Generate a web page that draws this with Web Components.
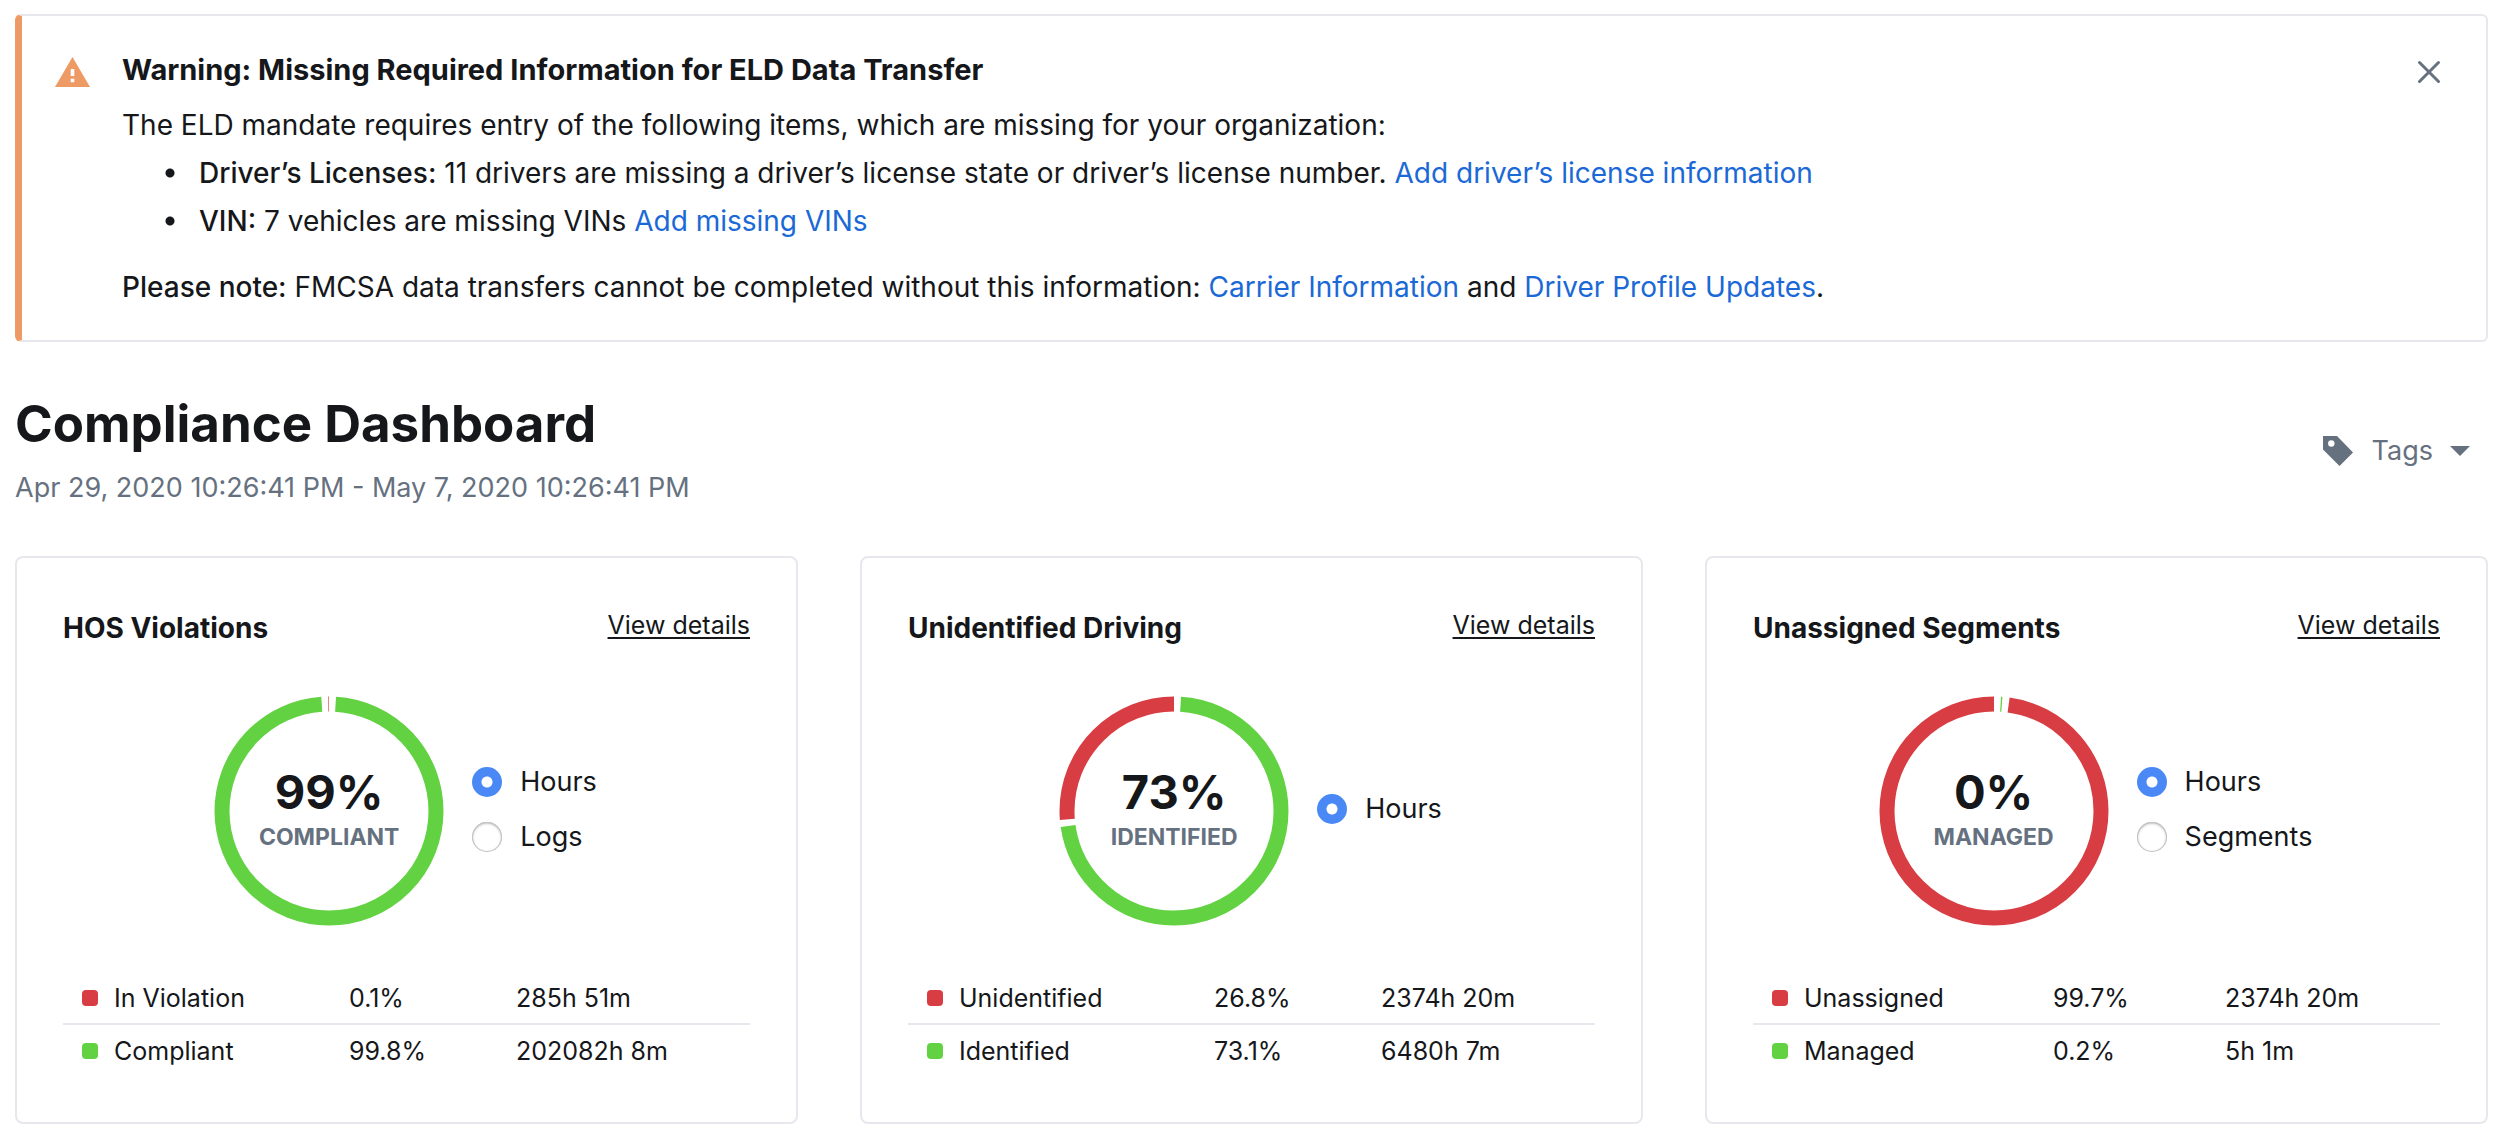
<!DOCTYPE html>
<html lang="en">
<head>
<meta charset="UTF-8">
<meta name="viewport" content="width=device-width, initial-scale=1.0">
<title>Compliance Dashboard</title>
<style>
    body {
        margin: 0;
        padding: 14px 12px 16px 15px;
        background: #fff;
        color: #15171a;
        font-family: Inter, "Liberation Sans", sans-serif;
        font-size: 27px;
        line-height: 48px;
    }
    alert-banner { font-size: 28px; }
    alert-banner p { margin: 0; }
    alert-banner ul { margin: 0 0 18px; padding-left: 43px; list-style: none; }
    alert-banner li {
        padding-left: 34px;
        background: radial-gradient(circle at 5px 24px, currentColor 4px, transparent 5px);
    }
    alert-banner a { color: #1b69d6; text-decoration: none; }
    alert-banner strong { font-weight: 500; }
    .cards {
        display: grid;
        grid-template-columns: repeat(3, minmax(0, 1fr));
        gap: 62px;
        margin-top: 50px;
    }
</style>
</head>
<body>
    <alert-banner>
        <span slot="title">Warning: Missing Required Information for ELD Data Transfer</span>
        <p>The ELD mandate requires entry of the following items, which are missing for your organization:</p>
        <ul>
            <li><strong>Driver’s Licenses:</strong> 11 drivers are missing a driver’s license state or driver’s license number. <a href="#licenses">Add driver’s license information</a></li>
            <li><strong>VIN:</strong> 7 vehicles are missing VINs <a href="#vins">Add missing VINs</a></li>
        </ul>
        <p><strong>Please note:</strong> FMCSA data transfers cannot be completed without this information: <a href="#carrier">Carrier Information</a> and <a href="#profiles">Driver Profile Updates</a>.</p>
    </alert-banner>

    <page-header>
        Compliance Dashboard
        <span slot="range">Apr 29, 2020 10:26:41 PM - May 7, 2020 10:26:41 PM</span>
        <tags-button slot="actions">Tags</tags-button>
    </page-header>

    <main class="cards">
        <metric-card metric="hos"></metric-card>
        <metric-card metric="unidentified"></metric-card>
        <metric-card metric="unassigned"></metric-card>
    </main>

<script>
const RED = '#d93d44';
const GREEN = '#62d242';

const METRICS = {
    hos: {
        title: 'HOS Violations',
        percent: '99%',
        caption: 'COMPLIANT',
        segments: [[GREEN, 99.9], [RED, 0.1]],
        options: ['Hours', 'Logs'],
        columns: [286, 167],
        rows: [
            [RED, 'In Violation', '0.1%', '285h 51m'],
            [GREEN, 'Compliant', '99.8%', '202082h 8m']
        ]
    },
    unidentified: {
        title: 'Unidentified Driving',
        percent: '73%',
        caption: 'IDENTIFIED',
        segments: [[GREEN, 73.2], [RED, 26.8]],
        options: ['Hours'],
        columns: [306, 167],
        rows: [
            [RED, 'Unidentified', '26.8%', '2374h 20m'],
            [GREEN, 'Identified', '73.1%', '6480h 7m']
        ]
    },
    unassigned: {
        title: 'Unassigned Segments',
        percent: '0%',
        caption: 'MANAGED',
        segments: [[GREEN, 0.2], [RED, 99.8]],
        options: ['Hours', 'Segments'],
        columns: [300, 172],
        rows: [
            [RED, 'Unassigned', '99.7%', '2374h 20m'],
            [GREEN, 'Managed', '0.2%', '5h 1m']
        ]
    }
};

class AlertBanner extends HTMLElement {
    constructor() {
        super();
        this.attachShadow({ mode: 'open' });
        this.shadowRoot.innerHTML = `
            <style>
                :host {
                    display: flex;
                    align-items: flex-start;
                    box-sizing: border-box;
                    padding: 36px 37px 29px 33px;
                    border: 2px solid #e7e7ed;
                    border-left: 7px solid #ee9a65;
                    border-radius: 6px;
                }
                .icon { flex: none; width: 36px; height: 32px; margin: 4px 31px 0 0; }
                .content { flex: 1; min-width: 0; }
                h2 {
                    margin: 0 0 13px;
                    font-size: 29px;
                    font-weight: 700;
                    line-height: 36px;
                }
                button {
                    flex: none;
                    display: flex;
                    padding: 8px;
                    border: 0;
                    background: none;
                    cursor: pointer;
                }
                button svg { width: 24px; height: 24px; }
            </style>
            <svg class="icon" viewBox="0 0 36 32" aria-hidden="true">
                <path fill="#ee9a65" d="M17.500 1 35 31H0z"/>
                <path fill="#fff" d="M15.700 13h3.600v7h-3.600zM15.700 22.800h3.600v3.400h-3.600z"/>
            </svg>
            <div class="content">
                <h2><slot name="title"></slot></h2>
                <slot></slot>
            </div>
            <button type="button" aria-label="Dismiss">
                <svg viewBox="0 0 24 24" fill="none" stroke="#66717f" stroke-width="3" stroke-linecap="round">
                    <path d="M2.500 2.500l19 19M21.500 2.500l-19 19"/>
                </svg>
            </button>
        `;
        this.shadowRoot.querySelector('button').addEventListener('click', () => this.remove());
    }
}

class PageHeader extends HTMLElement {
    constructor() {
        super();
        this.attachShadow({ mode: 'open' });
        this.shadowRoot.innerHTML = `
            <style>
                :host {
                    display: flex;
                    align-items: center;
                    justify-content: space-between;
                    margin-top: 55px;
                }
                h1 {
                    margin: 0 0 19px;
                    font-size: 51px;
                    font-weight: 700;
                    line-height: 54px;
                }
                .range { color: #66717f; line-height: 36px; }
            </style>
            <div>
                <h1><slot></slot></h1>
                <div class="range"><slot name="range"></slot></div>
            </div>
            <slot name="actions"></slot>
        `;
    }
}

class TagsButton extends HTMLElement {
    constructor() {
        super();
        this.attachShadow({ mode: 'open' });
        this.shadowRoot.innerHTML = `
            <style>
                :host { display: block; }
                button {
                    display: flex;
                    align-items: center;
                    padding: 0 18px 2px;
                    border: 0;
                    background: none;
                    color: #66717f;
                    font: inherit;
                    line-height: 36px;
                    cursor: pointer;
                }
                .tag { width: 32px; height: 32px; margin-right: 18px; }
                .caret { width: 20px; height: 10px; margin-left: 17px; }
            </style>
            <button type="button">
                <svg class="tag" viewBox="0 0 32 32" fill="#66717f" aria-hidden="true">
                    <path fill-rule="evenodd" d="M1 1h14l16 16.500L17.500 31 1 14.500zM9.300 5.300a3.200 3.200 0 1 0 0 6.400 3.200 3.200 0 0 0 0-6.400z"/>
                </svg>
                <slot></slot>
                <svg class="caret" viewBox="0 0 20 10" fill="#66717f" aria-hidden="true"><path d="M0 0h20L10 10z"/></svg>
            </button>
        `;
    }
}

class DonutChart extends HTMLElement {
    constructor() {
        super();
        this.attachShadow({ mode: 'open' });
    }

    set segments(segments) {
        // every arc is preceded by a gap, all in degrees clockwise from the top
        const gap = 3.6;
        const total = 360 - gap * segments.length;
        let start = 0;
        const arcs = segments.map(([color, share]) => {
            const length = total * share / 100;
            start += gap;
            const arc = `<circle cx="115" cy="115" r="107" pathLength="360" stroke="${color}" stroke-dasharray="${length} 360" stroke-dashoffset="${-start}"/>`;
            start += length;
            return arc;
        });
        this.shadowRoot.innerHTML = `
            <style>
                :host { display: grid; width: 230px; height: 230px; }
                svg, .label { grid-area: 1 / 1; }
                .label {
                    display: flex;
                    flex-direction: column;
                    align-items: center;
                    justify-content: center;
                    gap: 5px;
                    padding-bottom: 1px;
                }
            </style>
            <svg viewBox="0 0 230 230" aria-hidden="true">
                <g fill="none" stroke-width="15" transform="rotate(-90 115 115)">${arcs.join('')}</g>
            </svg>
            <div class="label"><slot></slot></div>
        `;
    }
}

class MetricCard extends HTMLElement {
    constructor() {
        super();
        this.attachShadow({ mode: 'open' });
    }

    connectedCallback() {
        const name = this.getAttribute('metric');
        const metric = METRICS[name];
        this.shadowRoot.innerHTML = `
            <style>
                :host {
                    display: block;
                    box-sizing: border-box;
                    padding: 50px 46px 46px;
                    border: 2px solid #e7e7ed;
                    border-radius: 8px;
                }
                header {
                    display: flex;
                    align-items: flex-start;
                    justify-content: space-between;
                    margin-bottom: 48px;
                }
                h2 {
                    margin: 0;
                    font-size: 28px;
                    font-weight: 700;
                    line-height: 40px;
                }
                a {
                    color: inherit;
                    font-size: 25px;
                    line-height: 34px;
                    text-decoration-thickness: 2px;
                    text-underline-offset: 3px;
                }
                .chart {
                    display: flex;
                    align-items: center;
                    justify-content: center;
                    gap: 28px;
                    margin-bottom: 46px;
                }
                .percent { font-size: 47px; font-weight: 700; line-height: 48px; }
                .caption { color: #66717f; font-size: 23px; font-weight: 700; line-height: 32px; }
                fieldset {
                    display: grid;
                    gap: 19px;
                    margin: 0;
                    padding: 0 2px 4px 0;
                    border: 0;
                }
                label {
                    display: flex;
                    align-items: center;
                    gap: 18px;
                    line-height: 36px;
                }
                input {
                    appearance: none;
                    width: 30px;
                    height: 30px;
                    margin: 0;
                    border-radius: 50%;
                    background: #fff;
                    box-shadow: inset 0 0 0 1px #c4c4c4, inset 0 1px 3px #999;
                }
                input:checked {
                    background: radial-gradient(circle, #fff 5px, #4a89f5 6px);
                    box-shadow: none;
                }
                table {
                    width: 100%;
                    border-collapse: collapse;
                    table-layout: fixed;
                    font-size: 25px;
                    line-height: 32px;
                }
                th, td { height: 51px; padding: 0; font-weight: 400; text-align: left; }
                tr + tr { border-top: 2px solid #e7e7ed; }
                .name { display: flex; align-items: center; gap: 16px; padding-left: 19px; }
                .swatch { width: 16px; height: 16px; border-radius: 4px; }
            </style>
            <header>
                <h2>${metric.title}</h2>
                <a href="#${name}">View details</a>
            </header>
            <div class="chart">
                <donut-chart>
                    <div class="percent">${metric.percent}</div>
                    <div class="caption">${metric.caption}</div>
                </donut-chart>
                <fieldset aria-label="Unit">
                    ${metric.options.map((option, index) => `<label><input type="radio" name="unit" ${index === 0 ? 'checked' : ''}>${option}</label>`).join('')}
                </fieldset>
            </div>
            <table>
                <colgroup>${metric.columns.map(width => `<col style="width: ${width}px">`).join('')}<col></colgroup>
                ${metric.rows.map(([color, label, share, time]) => `
                    <tr>
                        <th scope="row"><div class="name"><span class="swatch" style="background: ${color}"></span>${label}</div></th>
                        <td>${share}</td>
                        <td>${time}</td>
                    </tr>`).join('')}
            </table>
        `;
        this.shadowRoot.querySelector('donut-chart').segments = metric.segments;
    }
}

customElements.define('alert-banner', AlertBanner);
customElements.define('page-header', PageHeader);
customElements.define('tags-button', TagsButton);
customElements.define('donut-chart', DonutChart);
customElements.define('metric-card', MetricCard);
</script>
</body>
</html>
